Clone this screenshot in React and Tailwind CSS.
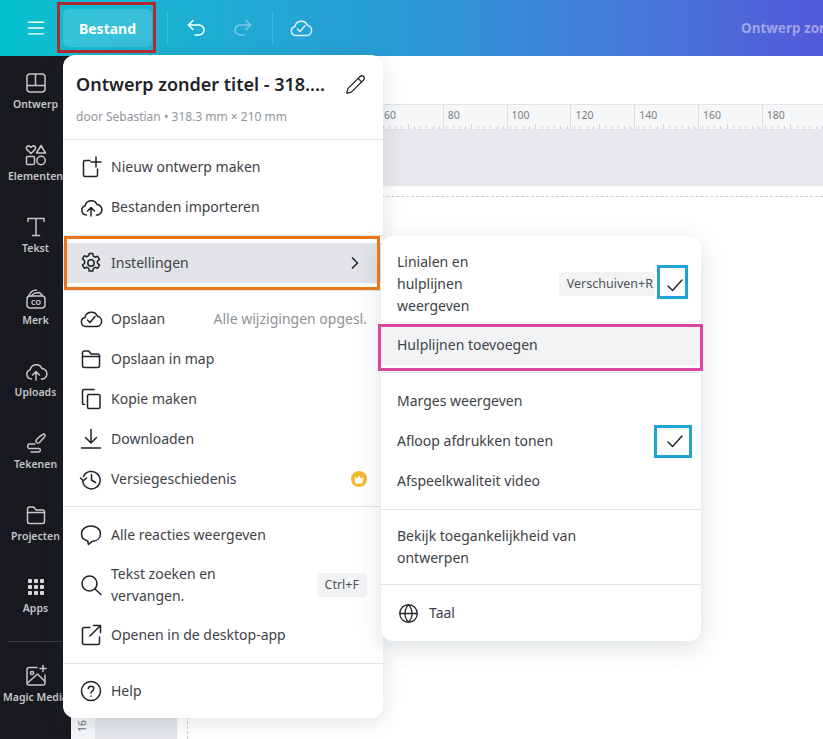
import { ChevronRight, Globe, Pencil } from "lucide-react";

const Ico = ({ size = 24, sw = 1.5, className = "", children }) => (
  <svg width={size} height={size} viewBox="0 0 24 24" fill="none" stroke="currentColor" strokeWidth={sw} strokeLinecap="round" strokeLinejoin="round" className={`shrink-0 ${className}`}>
    {children}
  </svg>
);

const cloud = "M7 19.5a4.5 4.5 0 0 1-1-8.9A6.5 6.5 0 0 1 18.4 9.2a5.2 5.2 0 0 1-.9 10.3Z";

const icons = {
  nieuw: <><path d="M11 5.5H6a1.5 1.5 0 0 0-1.5 1.5v13A1.5 1.5 0 0 0 6 21.5h11a1.5 1.5 0 0 0 1.5-1.5v-6" /><path d="M17 2v10M12 7h10" /></>,
  importeren: <><path d="M7.5 20a4.7 4.7 0 0 1-1.3-9.2A6.2 6.2 0 0 1 18 9.6a5.2 5.2 0 0 1-.6 10.4" /><path d="M12 21v-8M8.5 16l3.5-3.5 3.5 3.5" /></>,
  instellingen: <><circle cx="12" cy="12" r="3.2" /><path d="M10.2 2.5h3.6l.5 2.7 1.8 1 2.6-.9 1.8 3.1-2.1 1.8v2.1l2.1 1.800-1.800 3.100-2.600-.9-1.800 1-.5 2.700h-3.600l-.5-2.700-1.800-1-2.600.9-1.800-3.100 2.100-1.800V9.700L3.500 7.900l1.800-3.100 2.600.9 1.800-1z" /></>,
  opslaan: <><path d={cloud} /><path d="m8.500 13 2.500 2.500 5-6" /></>,
  map: <><path d="M3.500 7V6a2 2 0 0 1 2-2h4.200l2.300 3h6.500a2 2 0 0 1 2 2v9.500a2 2 0 0 1-2 2h-13a2 2 0 0 1-2-2Z" /><path d="M3.500 9.500h17" /></>,
  kopie: <><rect x="8.500" y="7.500" width="12.500" height="14" rx="1.500" /><path d="M5.500 17.500H5A1.500 1.500 0 0 1 3.500 16V4A1.500 1.500 0 0 1 5 2.500h10" /></>,
  downloaden: <><path d="M12 2.500V16M6.500 10.500 12 16l5.500-5.500M2.500 21h19" /></>,
  versie: <><path d="M4.500 9.500a8.700 8.700 0 1 1-.7 5" /><path d="M1.500 11 4.300 13.800 7.500 11" /><path d="M12.500 7.500V13l4 2.500" /></>,
  reacties: <><path d="M12 3c5 0 9.500 3 9.500 7.700 0 4.400-3.600 7.300-8.300 7.700L9.500 21.500 8.700 18C4.800 17 2.500 14.500 2.500 10.700 2.500 6 7 3 12 3Z" /></>,
  zoeken: <><circle cx="10.500" cy="10.500" r="7.500" /><path d="m16 16 6 5.500" /></>,
  openen: <><path d="M11 4.500H5A1.500 1.500 0 0 0 3.500 6v14A1.500 1.500 0 0 0 5 21.500h14a1.500 1.500 0 0 0 1.500-1.500v-6" /><path d="M21.500 2.500 11 13M14.500 2.500h7v7" /></>,
  help: <><circle cx="12" cy="12" r="9.500" /><path d="M9.300 9.500A2.800 2.800 0 0 1 12 7.300c1.600 0 2.800 1 2.800 2.400 0 2-2.800 2.200-2.800 4.300" /><path d="M12 17v.2" /></>,
};

const sidebar = [
  ["Ontwerp", <><rect x="3" y="3" width="18" height="18" rx="3" /><path d="M11.500 3v11.500H3M11.500 14.500H21" /></>],
  ["Elementen", <><path d="M7 10.500 2.800 6.400C1.200 4.500 3.800 1.800 6 3.500l1 .8 1-.8c2.200-1.700 4.800 1 3.200 2.900Z" /><path d="m17 2.500 4.500 7.500h-9Z" /><rect x="2.500" y="13.500" width="8" height="8" rx="1" /><circle cx="17" cy="17.500" r="4.200" /></>],
  ["Tekst", <><path d="M4 6.500V3.500h16v3M12 3.500v17M8.500 20.500h7" /></>],
  ["Merk", <><rect x="3" y="9" width="18" height="12" rx="3" /><path d="M4.500 9.500C6 5 9 3 12.500 3M7.500 9c1.500-2.500 4-3.500 8-3.500l3 3" /><text x="12" y="17.500" textAnchor="middle" fontSize="7" stroke="none" fill="currentColor" fontWeight="700" fontFamily="Noto Sans">CO</text></>],
  ["Uploads", icons.importeren],
  ["Tekenen", <><path d="M19.500 3c1.500 0 2 1.500 1 3l-5 5.500c-1 1-3.500.5-3.500-1.500 0-1 3-4.500 7.500-7Z" /><path d="M11 13H5a2.500 2.500 0 0 0 0 4.500h10a1.800 1.800 0 0 1 0 3.500H7" /></>],
  ["Projecten", icons.map],
];

const Nav = ({ label, children }) => (
  <div className="flex h-[72px] w-[71px] flex-col items-center gap-[2px] pt-[15px] text-[#c4c6c9]">
    <div className="flex h-6 w-6 items-center justify-center">{children}</div>
    <span className="whitespace-nowrap text-[10.5px] leading-[14px] font-semibold">{label}</span>
  </div>
);

const Row = ({ icon, right, children, active }) => (
  <div className={`flex h-10 items-center pr-4 pl-4 text-[#3e4248] ${active ? "bg-[#e2e4e7]" : ""}`}>
    <Ico className="mr-2 text-[#1f2226]">{icon}</Ico>
    <span className="flex-1 pb-[2px] whitespace-nowrap">{children}</span>
    {right}
  </div>
);

const SubRow = ({ children, className = "" }) => (
  <div className={`flex h-10 items-center pr-4 pb-[2px] pl-4 whitespace-nowrap text-[#3e4248] ${className}`}>{children}</div>
);

const Chip = ({ children, className = "" }) => (
  <span className={`rounded bg-[#f2f3f5] pl-2 text-[12.5px] leading-6 text-[#4e5258] ${className}`}>{children}</span>
);

const Sep = ({ gap = "" }) => <div className={`h-px bg-[#e1e3e6] ${gap}`} />;

const Check = ({ className = "" }) => (
  <svg width="20" height="20" viewBox="0 0 20 20" fill="none" stroke="#26292d" strokeWidth="1.500" strokeLinecap="round" strokeLinejoin="round" className={className}>
    <path d="m3 11 4.500 4.500L17 5" />
  </svg>
);

const rulerLabels = [60, 80, 100, 120, 140, 160, 180];

export default function App() {
  return (
    <div className="relative flex h-[739px] w-[823px] flex-col overflow-hidden bg-white text-[14px] font-['Noto_Sans',sans-serif]">
      {/* top bar */}
      <header className="flex h-14 shrink-0 items-center overflow-hidden bg-linear-to-r from-[#05c1cd] via-[#2a99d6] to-[#5258da] text-white">
        <div className="flex w-[63px] shrink-0 justify-center pl-2">
          <Ico size={20} sw={1.700}><path d="M3 5h18M3 12h18M3 19h18" /></Ico>
        </div>
        <div className="flex h-[38px] w-[89px] shrink-0 items-center justify-center rounded-md bg-white/15 text-[14px] font-bold">Bestand</div>
        <div className="ml-[15px] h-8 w-px shrink-0 bg-white/15" />
        <div className="ml-4 flex shrink-0 items-center gap-[23px]">
          <Ico><path d="M9 4.500 4.500 9 9 13.500" /><path d="M4.500 9H15a4.700 4.700 0 0 1 0 10h-4" /></Ico>
          <Ico className="opacity-40"><path d="m15 4.500 4.500 4.500L15 13.500" /><path d="M19.500 9H9a4.700 4.700 0 0 0 0 10h4" /></Ico>
        </div>
        <div className="ml-[17px] h-8 w-px shrink-0 bg-white/15" />
        <Ico className="ml-4 opacity-85">{icons.opslaan}</Ico>
        <span className="ml-[428px] shrink-0 whitespace-nowrap text-[13.5px] font-bold text-white/45">Ontwerp zonder titel</span>
      </header>

      <div className="flex min-h-0 flex-1">
        {/* left rail */}
        <nav className="flex w-[71px] shrink-0 flex-col bg-[#18191f]">
          {sidebar.map(([label, icon]) => (
            <Nav key={label} label={label}><Ico>{icon}</Ico></Nav>
          ))}
          <Nav label="Apps">
            <div className="grid grid-cols-3 gap-[2px]">
              {Array.from({ length: 9 }).map((_, i) => <span key={i} className="h-1 w-1 rounded-[1px] bg-[#d8d9db]" />)}
            </div>
          </Nav>
          <div className="mx-2 mt-[9px] h-px bg-[#3a3c42]" />
          <div className="mt-[7px]">
            <Nav label="Magic Media">
              <Ico><path d="M13 3.500H5a2 2 0 0 0-2 2v13.500a2 2 0 0 0 2 2h14a2 2 0 0 0 2-2v-8" /><circle cx="8" cy="9" r="1.600" /><path d="m3.500 19 10-9 7 7" /><path d="M19 1.500v6M16 4.500h6" /></Ico>
            </Nav>
          </div>
        </nav>

        {/* canvas */}
        <main className="flex min-w-0 flex-1 flex-col overflow-hidden">
          <div className="h-12 shrink-0 bg-white" />
          <div className="flex h-[26px] shrink-0 border-y border-[#e2e4e8] bg-[#f6f7f9] pl-[308px] text-[10.5px] text-[#7a7e84]">
            {rulerLabels.map((n) => (
              <div key={n} className="relative w-[63.800px] shrink-0 border-l border-[#dcdee2] pl-1">
                <span className="leading-[20px]">{n}</span>
                <div className="absolute right-0 bottom-0 left-0 flex h-[5px] items-end justify-around">
                  {Array.from({ length: 10 }).map((_, i) => <span key={i} className={`w-px bg-[#cfd2d6] ${i === 4 ? "h-[5px]" : "h-[3px]"}`} />)}
                </div>
              </div>
            ))}
          </div>
          <div className="h-14 shrink-0 bg-[#e8e9ec]" />
          <div className="flex min-h-0 flex-1">
            <div className="flex w-6 shrink-0 items-end justify-center bg-[#f4f5f7] pb-[5px] text-[10.5px] text-[#6c7076]">
              <span className="-rotate-90">16</span>
            </div>
            <div className="w-[82px] shrink-0 bg-[#e4e6ea]" />
            <div className="w-[10px] shrink-0" />
            <div className="mt-[10px] flex-1 border-t border-l border-dashed border-[#c9ccd0]" />
          </div>
        </main>
      </div>

      {/* Bestand menu */}
      <div className="absolute top-[55px] left-[63px] w-[320px] rounded-xl bg-white shadow-[0_4px_20px_rgba(57,76,96,0.16)]">
        <div className="h-[84px] px-[13px] pt-[18px]">
          <div className="mb-[14px] flex h-[22px] items-center justify-between pr-[4px]">
            <span className="whitespace-nowrap text-[18px] font-semibold text-[#1f2327]">Ontwerp zonder titel - 318....</span>
            <Pencil size={21} strokeWidth={1.500} className="text-[#25282c]" />
          </div>
          <div className="whitespace-nowrap text-[12px] leading-4 text-[#92959b]">door Sebastian • 318.3 mm × 210 mm</div>
        </div>
        <Sep />
        <div className="pt-[7px] pb-2">
          <Row icon={icons.nieuw}>Nieuw ontwerp maken</Row>
          <Row icon={icons.importeren}>Bestanden importeren</Row>
        </div>
        <Sep />
        <div className="py-[7px]">
          <Row icon={icons.instellingen} active right={<ChevronRight size={20} strokeWidth={2} className="mr-[2px] text-[#25282c]" />}>Instellingen</Row>
        </div>
        <Sep />
        <div className="pt-2 pb-[7px]">
          <Row icon={icons.opslaan} right={<span className="pb-[2px] text-[#8e9197]">Alle wijzigingen opgesl.</span>}>Opslaan</Row>
          <Row icon={icons.map}>Opslaan in map</Row>
          <Row icon={icons.kopie}>Kopie maken</Row>
          <Row icon={icons.downloaden}>Downloaden</Row>
          <Row
            icon={icons.versie}
            right={
              <span className="flex h-4 w-4 items-center justify-center rounded-full bg-[#f3b92f]">
                <svg width="10" height="9" viewBox="0 0 10 9" fill="#fff"><path d="M0.500 1.500 2.800 3.800 5 0.500 7.200 3.800 9.500 1.500 8.500 8.500H1.500Z" /></svg>
              </span>
            }
          >
            Versiegeschiedenis
          </Row>
        </div>
        <Sep />
        <div className="py-2">
          <Row icon={icons.reacties}>Alle reacties weergeven</Row>
          <div className="flex h-[60px] items-center pr-4 pl-4 text-[#3e4248]">
            <Ico className="mr-2 text-[#1f2226]">{icons.zoeken}</Ico>
            <span className="flex-1 leading-[22px]">Tekst zoeken en<br />vervangen.</span>
            <Chip className="pr-2">Ctrl+F</Chip>
          </div>
          <Row icon={icons.openen}>Openen in de desktop-app</Row>
        </div>
        <Sep />
        <div className="py-[7px]">
          <Row icon={icons.help}>Help</Row>
        </div>
      </div>

      {/* Instellingen submenu */}
      <div className="absolute top-[236px] left-[381px] w-[320px] rounded-xl bg-white py-2 shadow-[0_6px_24px_rgba(57,76,96,0.18)]">
        <div className="flex h-[81px] items-center pr-4 pl-4 text-[#3e4248]">
          <span className="flex-1 pb-[2px] leading-[22px]">Linialen en<br />hulplijnen<br />weergeven</span>
          <Chip className="mb-[2px] pr-[2px]">Verschuiven+R</Chip>
          <div className="flex w-[30px] justify-end"><Check /></div>
        </div>
        <SubRow className="bg-[#f2f3f5]">Hulplijnen toevoegen</SubRow>
        <Sep gap="mt-[7px] mb-2" />
        <SubRow>Marges weergeven</SubRow>
        <SubRow>
          <span className="flex-1">Afloop afdrukken tonen</span>
          <Check className="mt-[2px]" />
        </SubRow>
        <SubRow>Afspeelkwaliteit video</SubRow>
        <Sep gap="my-2" />
        <div className="px-4 py-[7px] leading-[22px] text-[#3e4248]">Bekijk toegankelijkheid van<br />ontwerpen</div>
        <Sep gap="my-2" />
        <div className="flex h-10 items-center pl-[17px] text-[#3e4248]">
          <Globe size={21} strokeWidth={1.500} className="mr-[10px] text-[#25282c]" />
          <span className="pb-[2px]">Taal</span>
        </div>
      </div>

      {/* annotation frames */}
      <div className="absolute top-[2px] left-[57px] h-[51px] w-[99px] border-[3px] border-[#b02a2f]" />
      <div className="absolute top-[236px] left-[64px] h-[54px] w-[316px] border-[3px] border-[#e8761d]" />
      <div className="absolute top-[265px] left-[657px] h-[34px] w-[31px] border-[3px] border-[#1fa3d6]" />
      <div className="absolute top-[425px] left-[654px] h-[33px] w-[38px] border-[3px] border-[#1fa3d6]" />
      <div className="absolute top-[324px] left-[378px] h-[47px] w-[325px] border-[3px] border-[#d7489c]" />
    </div>
  );
}
